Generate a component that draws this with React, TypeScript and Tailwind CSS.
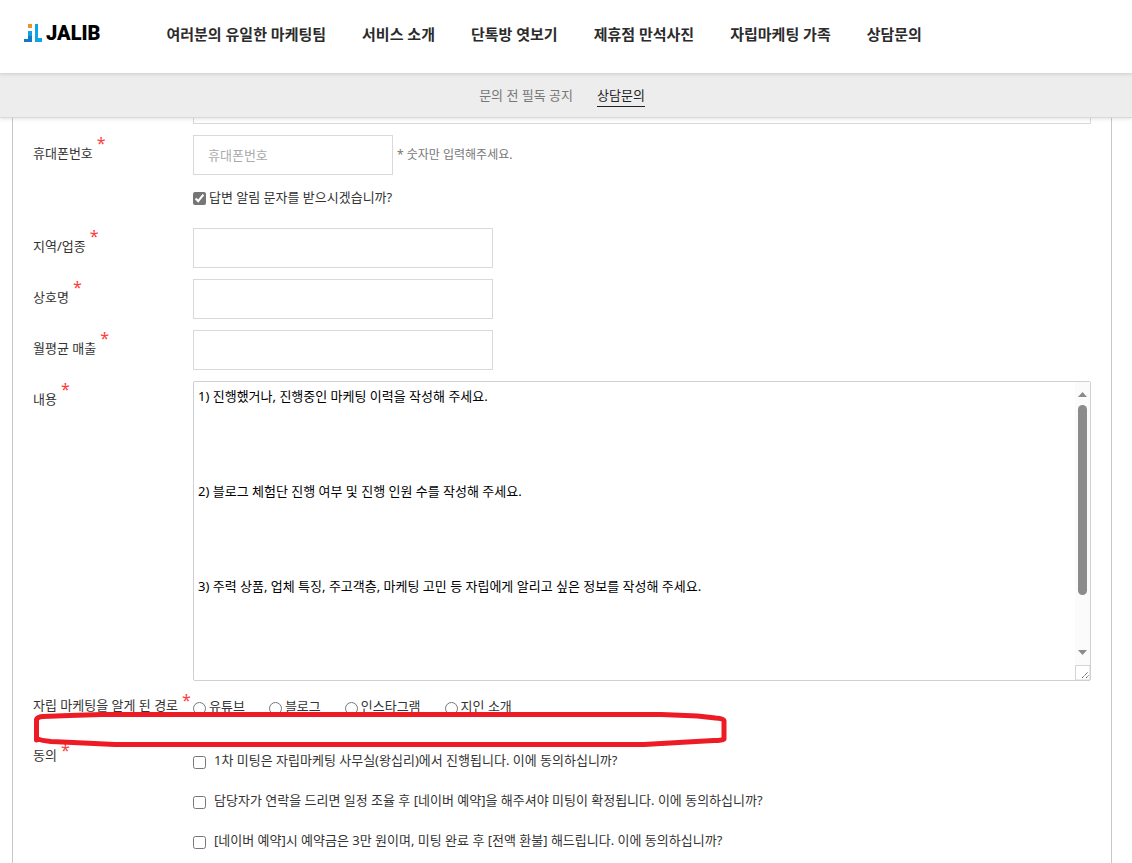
import type { ReactNode } from "react";

const NAV_LINKS = [
  "여러분의 유일한 마케팅팀",
  "서비스 소개",
  "단톡방 엿보기",
  "제휴점 만석사진",
  "자립마케팅 가족",
  "상담문의",
];

const CHANNELS = ["유튜브", "블로그", "인스타그램", "지인 소개"];

const AGREEMENTS = [
  "1차 미팅은 자립마케팅 사무실(왕십리)에서 진행됩니다. 이에 동의하십니까?",
  "담당자가 연락을 드리면 일정 조율 후 [네이버 예약]을 해주셔야 미팅이 확정됩니다. 이에 동의하십니까?",
  "[네이버 예약]시 예약금은 3만 원이며, 미팅 완료 후 [전액 환불] 해드립니다. 이에 동의하십니까?",
];

const CONTENT = [
  "1) 진행했거나, 진행중인 마케팅 이력을 작성해 주세요.",
  "2) 블로그 체험단 진행 여부 및 진행 인원 수를 작성해 주세요.",
  "3) 주력 상품, 업체 특징, 주고객층, 마케팅 고민 등 자립에게 알리고 싶은 정보를 작성해 주세요.",
  "",
].join("\n\n\n\n\n");

function Logo() {
  return (
    <a href="#" className="flex items-center gap-1 pb-1" aria-label="JALIB">
      <svg width="18" height="18" viewBox="0 0 18 18" aria-hidden="true">
        <rect x="4" y="0" width="4" height="4" fill="#f0922b" />
        <path d="M4 7h4v11H0v-3h4z" fill="#1478c8" />
        <path d="M4 7h4v5H4z" fill="#12a0e0" />
        <path d="M11 0h3v14h4v4h-7z" fill="#0ea5e6" />
      </svg>
      <span className="font-['Roboto',sans-serif] text-xl leading-6 font-black text-black">JALIB</span>
    </a>
  );
}

function Header() {
  return (
    <header className="relative z-10">
      <div className="relative z-10 flex h-[73px] items-center gap-[66px] bg-white px-6 pb-1 shadow-[0_1px_4px_rgba(0,0,0,0.15)]">
        <Logo />
        <nav className="flex gap-9 text-[15px] font-bold whitespace-nowrap text-[#2b2b2b]">
          {NAV_LINKS.map((link) => (
            <a key={link} href="#">
              {link}
            </a>
          ))}
        </nav>
      </div>
      <nav className="flex h-[45px] items-center justify-center gap-6 border-b border-[#d9d9d9] bg-[#ededed] pt-px pr-2 text-[13px] shadow-[0_1px_4px_rgba(0,0,0,0.12)]">
        <a href="#" className="border-b border-transparent leading-[22px] text-[#777]">
          문의 전 필독 공지
        </a>
        <a href="#" className="border-b border-[#222] leading-[22px] text-[#222]">
          상담문의
        </a>
      </nav>
    </header>
  );
}

function Row({
  label,
  htmlFor,
  className = "pb-[11px]",
  markClass = "leading-[0px]",
  children,
}: {
  label: string;
  htmlFor?: string;
  className?: string;
  markClass?: string;
  children: ReactNode;
}) {
  const Tag = htmlFor ? "label" : "span";
  return (
    <div className={`flex ${className}`}>
      <div className="w-40 shrink-0 pt-2">
        <Tag htmlFor={htmlFor} className="flex items-start gap-1 leading-5 whitespace-nowrap">
          {label}
          <span className={`text-base text-[#ff3b3b] ${markClass}`}>*</span>
        </Tag>
      </div>
      {children}
    </div>
  );
}

function TextBox({ id }: { id: string }) {
  return <input id={id} type="text" className="h-10 w-[300px] border border-[#d9d9d9] px-[15px]" />;
}

function ContentBox() {
  return (
    <div className="relative h-[300px] flex-1">
      <textarea
        id="content"
        defaultValue={CONTENT}
        className="block size-full resize-none overflow-hidden rounded-[2px] border border-[#cfcfd8] py-[5px] pr-5 pl-1 leading-[19px] text-black"
      />
      <div className="absolute inset-y-px right-px flex w-[15px] flex-col bg-[#fbfbfb]">
        <svg width="15" height="23" viewBox="0 0 15 23" aria-hidden="true">
          <path d="M3 15l4.500-5 4.500 5z" fill="#8b8b8b" />
        </svg>
        <div className="ml-[3px] h-[190px] w-[9px] rounded-full bg-[#8b8b8b]" />
        <svg className="mt-auto" width="15" height="35" viewBox="0 0 15 35" aria-hidden="true">
          <path d="M3 5h9l-4.500 5z" fill="#8b8b8b" />
          <path d="M0.500 35V20.500H15V35z" fill="#fff" stroke="#d4d4d8" />
          <path d="M7 33l6-6M11 33l3-3" stroke="#555" strokeDasharray="1.400 .6" />
        </svg>
      </div>
    </div>
  );
}

function Highlight() {
  return (
    <svg width="696" height="38" viewBox="0 0 696 38" fill="none" aria-hidden="true">
      <path
        d="M3.500 29V8.500q1-2.500 6-3l27-1 32-1h560l36 1.500 18 2q8 .5 8.500 2.500V28q-2 1.500-10 1.500l-18 1-52 3H82l-42-2-22-1q-11-1-14-3"
        stroke="#ed1c24"
        strokeWidth="5"
        strokeLinejoin="round"
        strokeLinecap="round"
      />
    </svg>
  );
}

export default function App() {
  return (
    <div className="flex min-h-screen flex-col bg-white font-['Noto_Sans','Noto_Sans_CJK_KR',sans-serif] text-[13px] text-[#333]">
      <Header />
      <form className="mr-5 ml-3 flex-1 border-x border-[#c8c8c8] px-5">
        <div className="mb-[11px] flex h-[6px] items-end overflow-hidden pl-40">
          <input type="text" aria-label="이메일" className="h-10 w-full shrink-0 border border-[#d9d9d9]" />
        </div>

        <Row label="휴대폰번호" htmlFor="phone" className="pb-5">
          <div>
            <div className="flex items-center gap-1">
              <input
                id="phone"
                type="text"
                placeholder="휴대폰번호"
                className="h-10 w-[200px] border border-[#d9d9d9] px-[14px] placeholder:text-[#aaa]"
              />
              <span className="text-xs text-[#777]">* 숫자만 입력해주세요.</span>
            </div>
            <label className="mt-3 flex items-center gap-[3px] leading-[21px]">
              <input type="checkbox" defaultChecked className="mt-[2px] size-[13px] accent-[#767676]" />
              답변 알림 문자를 받으시겠습니까?
            </label>
          </div>
        </Row>

        <Row label="지역/업종" htmlFor="area">
          <TextBox id="area" />
        </Row>
        <Row label="상호명" htmlFor="shop">
          <TextBox id="shop" />
        </Row>
        <Row label="월평균 매출" htmlFor="sales">
          <TextBox id="sales" />
        </Row>
        <Row label="내용" htmlFor="content" className="pb-[6px]">
          <ContentBox />
        </Row>

        <div className="relative">
          <Row label="자립 마케팅을 알게 된 경로" className="h-[50px]" markClass="leading-[10px]">
            <div className="flex gap-6 pt-[10px]">
              {CHANNELS.map((name) => (
                <label key={name} className="flex h-5 items-center gap-[3px] whitespace-nowrap">
                  <input type="radio" name="channel" className="mt-[2px] size-[13px]" />
                  {name}
                </label>
              ))}
            </div>
          </Row>
          <Row label="동의" className="pb-0" markClass="leading-[10px]">
            <div className="pt-1">
              {AGREEMENTS.map((text) => (
                <label key={text} className="flex h-10 items-center gap-2">
                  <input type="checkbox" className="mt-[2px] size-[13px]" />
                  {text}
                </label>
              ))}
            </div>
          </Row>
          <div className="pointer-events-none absolute top-6 left-0">
            <Highlight />
          </div>
        </div>
      </form>
    </div>
  );
}
